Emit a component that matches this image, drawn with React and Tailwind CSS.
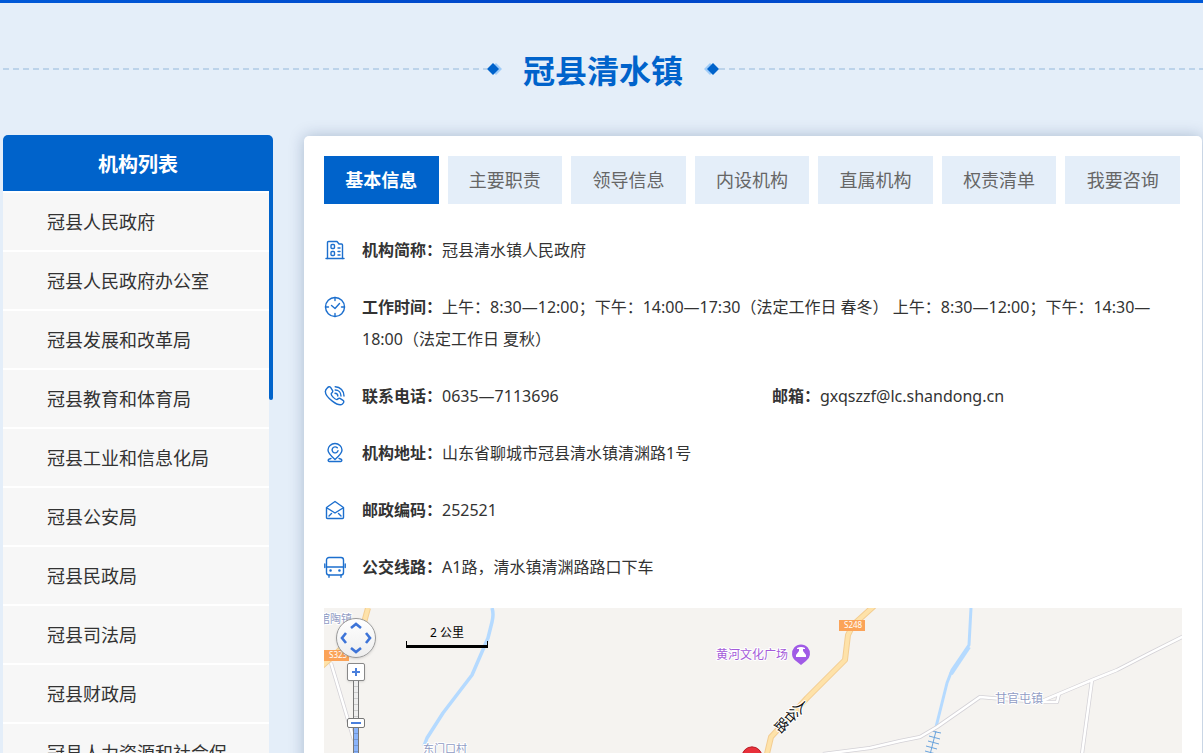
const departments = [
    '冠县人民政府',
    '冠县人民政府办公室',
    '冠县发展和改革局',
    '冠县教育和体育局',
    '冠县工业和信息化局',
    '冠县公安局',
    '冠县民政局',
    '冠县司法局',
    '冠县财政局',
    '冠县人力资源和社会保障局',
];

const tabs = ['基本信息', '主要职责', '领导信息', '内设机构', '直属机构', '权责清单', '我要咨询'];

const icons = {
    building: (
        <>
            <path d="M3.5 19.5V3.5Q3.5 2.5 4.5 2.5H13L15 5H17.5Q18.5 5 18.5 6V19.5" />
            <path d="M2 19.5H20M14 9H16M14 12.5H16M14 16H16" />
            <rect x="7" y="5.5" width="3.5" height="4" rx="1" />
            <rect x="7" y="12.5" width="3.5" height="4" rx="1" />
        </>
    ),
    clock: (
        <>
            <circle cx="11" cy="11" r="9.5" />
            <path d="M11 1.5V4.5M11 17.5V20.5M1.5 11H4.5M17.5 11H20.5M7.5 9.5L11 12.5L15.5 7.5" />
        </>
    ),
    phone: (
        <>
            <path d="M3 3.2C4.4 1.6 5.6 1.2 6.6 2.4L8.6 5.6C9.4 7 7.6 7.8 7.2 8.8C7 10.6 11 14.6 12.8 14.6C14 14.2 14.6 12.6 16 13.4L19 15.4C20.4 16.4 19.8 17.6 18.4 19C14.6 22.4 1 12 1.4 6.4C1.4 5.2 2.2 4 3 3.2Z" />
            <path d="M11 8.2C12.6 8.2 13.8 9.4 13.8 11M11.2 5C14.6 5 17 7.6 17 11M11.2 1.8C16.4 1.8 20 6 20 11" />
        </>
    ),
    pin: (
        <>
            <path d="M11 17.5C7 14 4 11.2 4 8A7 6.5 0 0 1 18 8C18 11.2 15 14 11 17.5Z" />
            <path d="M13.3 5.8A3 3 0 1 0 14 8.6M7 16.5C3.5 17.2 3.5 19 5.5 19.5H16.5C18.5 19 18.5 17.2 15 16.5" />
        </>
    ),
    mail: (
        <>
            <path d="M2.5 8.5L11 2.5L19.5 8.5V18.5Q19.5 19.5 18.5 19.5H3.5Q2.5 19.5 2.5 18.5Z" />
            <path d="M3 9L11 14L19 9M5 17L7.5 14.5M17 17L14.5 14.5" />
        </>
    ),
    bus: (
        <>
            <rect x="2.5" y="1.5" width="17" height="17.5" rx="2.5" />
            <path d="M2.5 11H19.5M0.8 8V11.5M21.2 8V11.5M5 19V21.2M17 19V21.2" />
            <path d="M6.5 14.5H6.6M15.4 14.5H15.5" strokeWidth="2.5" />
        </>
    ),
};

const info = [
    { icon: 'building', fields: [['机构简称：', '冠县清水镇人民政府']] },
    {
        icon: 'clock',
        fields: [['工作时间：', '上午：8:30—12:00；下午：14:00—17:30（法定工作日 春冬） 上午：8:30—12:00；下午：14:30—18:00（法定工作日 夏秋）']],
    },
    { icon: 'phone', fields: [['联系电话：', '0635—7113696'], ['邮箱：', 'gxqszzf@lc.shandong.cn']] },
    { icon: 'pin', fields: [['机构地址：', '山东省聊城市冠县清水镇清渊路1号']] },
    { icon: 'mail', fields: [['邮政编码：', '252521']] },
    { icon: 'bus', fields: [['公交线路：', 'A1路，清水镇清渊路路口下车']] },
];

function Icon({ name }) {
    return (
        <svg className="mt-[5px] h-[22px] w-[22px] shrink-0" viewBox="0 0 22 22" fill="none" stroke="#1c6fce" strokeWidth="1.4" strokeLinejoin="round" strokeLinecap="round" aria-hidden="true">
            {icons[name]}
        </svg>
    );
}

function Diamonds({ flip }) {
    return (
        <svg className={flip ? 'h-3 w-4 shrink-0 -scale-x-100' : 'h-3 w-4 shrink-0'} viewBox="0 0 16 12" aria-hidden="true">
            <path d="M9 0L15 6L9 12L3 6Z" fill="#9ecbf8" />
            <path d="M6 0L12 6L6 12L0 6Z" fill="#0063cb" />
        </svg>
    );
}

// dashes are 6px with a 4px gap
function DashedLine() {
    return <div className="h-[2px] flex-1 bg-[repeating-linear-gradient(90deg,#bcd3ea_0_6px,transparent_6px_10px)]" />;
}

function Sidebar() {
    return (
        <aside className="w-[270px] shrink-0">
            <h2 className="rounded-t-[5px] bg-[#0063cb] pt-1 text-center text-xl leading-[52px] font-bold text-white">机构列表</h2>
            <div className="flex">
                <ul className="min-w-0 flex-1 border-t-2 border-white">
                    {departments.map(name => (
                        <li key={name} className="border-b-2 border-white bg-[#f7f7f7] pr-10 pl-11">
                            <a href="#" className="block h-[57px] overflow-hidden text-lg leading-[59px] break-all text-[#333]">{name}</a>
                        </li>
                    ))}
                </ul>
                <div className="h-[209px] w-1 rounded-b-sm bg-[#0063cb]" />
            </div>
        </aside>
    );
}

function Map() {
    return (
        <div className="relative mt-[25px] overflow-hidden">
            <svg className="h-[400px] w-full bg-[#f5f3f0]" viewBox="0 0 858 400" preserveAspectRatio="xMinYMin slice" fill="none" strokeLinejoin="round">
                <g stroke="#b5daff">
                    <path d="M168 0Q170 6 168 14L164 30L148 67L119 105L103 130L100 138" strokeWidth="3.5" />
                    <path d="M647 0L645 37L628 62L623 75L612 119" strokeWidth="3" />
                    <path d="M645 39L627 66" strokeWidth="4" />
                </g>
                <path d="M612 123L600 170M607 123L617 125M605 128L616 131M604 133L615 136M602 138L613 141M601 143L612 146" stroke="#6aa3dc" />
                <g stroke="#d3d1d6" strokeWidth="4">
                    <path d="M7 55L30 132M499 146L546 140L576 133L596 129L613 119L656 89L716 94H733L735 86" />
                    <path d="M718 93L768 72L793 62L826 45L862 27M768 72L758 146" />
                </g>
                <g stroke="#fff" strokeWidth="2.5">
                    <path d="M7 55L30 132M499 146L546 140L576 133L596 129L613 119L656 89L716 94H733L735 86" />
                    <path d="M718 93L768 72L793 62L826 45L862 27M768 72L758 146" />
                </g>
                <path d="M44 0L38 22L-2 58M550 -2L529 17L524 27L521 52L483 90L447 129L442 150" stroke="#f3cd92" strokeWidth="6" />
                <path d="M44 0L38 22L-2 58M550 -2L529 17L524 27L521 52L483 90L447 129L442 150" stroke="#fee2a9" strokeWidth="4" />
                <rect x="-4" y="42" width="29" height="11" fill="#fba358" />
                <rect x="515" y="12" width="26" height="11" fill="#fba358" />
                <g className="font-['Noto_Sans'] text-[8px]" fill="#fff">
                    <text x="5" y="50">S323</text>
                    <text x="520" y="20">S248</text>
                </g>
                <g fill="#919cc4" stroke="#fff" strokeWidth="2" paintOrder="stroke">
                    <g className="text-[11px]">
                        <text x="-5" y="15">馆陶镇</text>
                        <text x="99" y="145">东门口村</text>
                    </g>
                    <text className="text-[12px]" x="671" y="95">甘官屯镇</text>
                    <text className="text-[12px]" x="392" y="51" fill="#a45bd9">黄河文化广场</text>
                    <g className="text-[14px]" fill="#111" textAnchor="middle" dominantBaseline="central">
                        <text transform="translate(477 98) rotate(42)">人</text>
                        <text transform="translate(468 107) rotate(42)">谷</text>
                        <text transform="translate(458 117) rotate(42)">路</text>
                    </g>
                </g>
                <path d="M477 57L472 53A9 9 0 1 1 482 53Z" fill="#a05ae6" />
                <path d="M473 40Q477 38 481 40V41H479V43L482 47V49H472V47L475 43V41H473Z" fill="#fff" />
                <path d="M428 172L421 156A10 10 0 1 1 435 156Z" fill="#e8303a" stroke="#b71c25" />
            </svg>
            <div className="absolute top-[17px] left-[82px] w-[82px] text-center text-xs text-black">
                2 公里
                <div className="h-[7px] border-x border-b-3 border-black" />
            </div>
            <button type="button" aria-label="平移" className="absolute top-[10px] left-3 h-10 w-10 rounded-full border border-[#999] bg-linear-to-b from-white to-[#eee] shadow">
                <svg viewBox="0 0 38 38" fill="none" stroke="#3d74d8" strokeWidth="2.6">
                    <path d="M14 9L19 5L24 9M14 29L19 33L24 29M9 14L5 19L9 24M29 14L33 19L29 24" />
                </svg>
            </button>
            <div className="absolute top-[55px] left-[23px] flex flex-col items-center">
                <button type="button" aria-label="放大" className="h-[18px] w-[18px] rounded-xs border border-[#888] bg-white shadow">
                    <svg viewBox="0 0 16 16" stroke="#4a7fdc" strokeWidth="2"><path d="M4 8H12M8 4V12" /></svg>
                </button>
                <div className="h-[37px] w-[6px] border-x border-[#777] bg-[repeating-linear-gradient(#eee_0_5px,#ccc_5px_6px)]" />
                <button type="button" aria-label="缩放级别" className="h-[10px] w-[18px] rounded-xs border border-[#777] bg-white">
                    <svg viewBox="0 0 16 8" stroke="#4a7fdc" strokeWidth="2"><path d="M3 4H13" /></svg>
                </button>
                <div className="h-20 w-[6px] border-x border-[#777] bg-[repeating-linear-gradient(#8ab4fb_0_5px,#7297d6_5px_6px)]" />
            </div>
        </div>
    );
}

export default function App() {
    return (
        <div className="h-screen overflow-hidden bg-[#e4eef9] font-['Noto_Sans','Noto_Sans_CJK_SC',sans-serif] text-[#333]">
            <div className="h-[3px] bg-linear-to-r from-[#0059d8] via-[#0044c8] to-[#0059d8]" />

            <header className="flex items-center pt-[39px] pl-[3px]">
                <DashedLine />
                <Diamonds />
                <h1 className="px-5 pt-1 text-[32px] leading-[50px] font-bold text-[#0063cb]">冠县清水镇</h1>
                <Diamonds flip />
                <DashedLine />
            </header>

            <div className="mt-[39px] flex gap-[31px] pr-px pl-[3px]">
                <Sidebar />
                <main className="mt-px min-w-0 flex-1 rounded-[5px] bg-white p-5 shadow-[0_0_15px_rgba(0,40,90,0.25)]">
                    <nav className="mr-[2px] grid grid-cols-7 gap-[9px]">
                        {tabs.map((tab, i) => (
                            <button
                                key={tab}
                                type="button"
                                className={i === 0 ? 'h-12 bg-[#0063cb] text-lg font-bold text-white' : 'h-12 bg-[#e4eef9] text-lg text-[#666]'}
                            >
                                {tab}
                            </button>
                        ))}
                    </nav>

                    <dl className="mt-[30px] flex flex-col gap-[25px]">
                        {info.map(row => (
                            <div key={row.icon} className="flex gap-4 leading-8">
                                <Icon name={row.icon} />
                                <div className={row.fields.length > 1 ? 'grid flex-1 grid-cols-2' : 'flex-1'}>
                                    {row.fields.map(([label, value]) => (
                                        <div key={label}>
                                            <dt className="inline font-bold">{label}</dt>
                                            <dd className="inline">{value}</dd>
                                        </div>
                                    ))}
                                </div>
                            </div>
                        ))}
                    </dl>

                    <Map />
                </main>
            </div>
        </div>
    );
}
